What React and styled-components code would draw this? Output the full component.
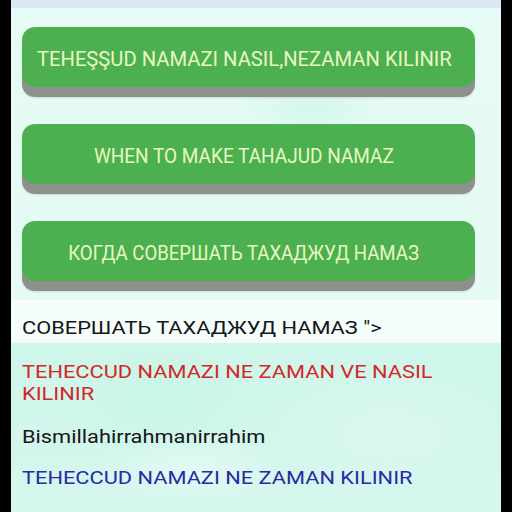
import React from "react";
import styled, { createGlobalStyle } from "styled-components";

const Global = createGlobalStyle`
  html, body { margin: 0; padding: 0; background: #000; }
  body { width: 512px; height: 512px; overflow: hidden; font-family: Roboto, "Liberation Sans", Arial, sans-serif; }
`;

const Frame = styled.div`
  display: flex;
  width: 512px;
  height: 512px;
  background: #000;
`;

const Screen = styled.div`
  margin-left: 11px;
  width: 490px;
  height: 512px;
  display: flex;
  flex-direction: column;
  background:
    radial-gradient(ellipse 140px 50px at 180px 470px, rgba(235,252,247,0.6), rgba(235,252,247,0) 70%),
    radial-gradient(ellipse 160px 90px at 150px 400px, rgba(190,245,225,0.5), rgba(190,245,225,0) 70%),
    radial-gradient(ellipse 180px 90px at 380px 430px, rgba(225,250,243,0.6), rgba(225,250,243,0) 70%),
    radial-gradient(ellipse 120px 40px at 300px 108px, rgba(205,246,234,0.7), rgba(205,246,234,0) 70%),
    linear-gradient(180deg, #e6fbf4 0%, #e4faf3 60%, #cff6ea 68%, #d6f7ee 100%);
`;

const TopBar = styled.div`
  height: 8px;
  background: #dce9f5;
`;

const ButtonList = styled.div`
  display: flex;
  flex-direction: column;
  gap: 37px;
  padding: 19px 26px 0 11px;
`;

const GreenButton = styled.div`
  height: 60px;
  border-radius: 13px;
  background: #4cb050;
  box-shadow: 0 10px 0 #8e908e, 0 11px 2px rgba(0,0,0,0.12);
  display: flex;
  align-items: center;
  justify-content: center;
  padding: 3px 9px 0 0;
  box-sizing: border-box;
  color: #e8f8c2;
  font-family: Roboto, "Liberation Sans", sans-serif;
  font-size: 20px;
  white-space: nowrap;
`;

const ButtonLabel = styled.span`
  display: inline-block;
  transform: scaleX(${(p) => p.$sx || 1});
`;

const Rows = styled.div`
  display: flex;
  flex-direction: column;
  margin-top: 19px;
`;

const Band = styled.div`
  height: 43px;
  box-sizing: border-box;
  padding: 17px 11px 0;
  background: #f4fdfb;
`;

const Row = styled.div`
  margin-top: ${(p) => p.$mt || "0px"};
  padding: 0 11px;
  font-family: Roboto, "Liberation Sans", sans-serif;
  font-size: 17.5px;
  line-height: 22px;
  color: ${(p) => p.$color || "#161616"};
`;

const Wide = styled.span`
  display: inline-block;
  width: ${(p) => p.$w || 370}px;
  transform: scaleX(1.245);
  transform-origin: left center;
  white-space: normal;
`;

export default function App() {
  return (
    <>
      <Global />
      <Frame>
        <Screen>
          <TopBar />
          <ButtonList>
            <GreenButton>
              <ButtonLabel $sx={1.01}>TEHEŞŞUD NAMAZI NASIL,NEZAMAN KILINIR</ButtonLabel>
            </GreenButton>
            <GreenButton>
              <ButtonLabel $sx={0.95}>WHEN TO MAKE TAHAJUD NAMAZ</ButtonLabel>
            </GreenButton>
            <GreenButton>
              <ButtonLabel $sx={0.93}>КОГДА СОВЕРШАТЬ ТАХАДЖУД НАМАЗ</ButtonLabel>
            </GreenButton>
          </ButtonList>
          <Rows>
            <Band>
              <Row style={{ padding: 0 }}>
                <Wide>СОВЕРШАТЬ ТАХАДЖУД НАМАЗ "&gt;</Wide>
              </Row>
            </Band>
            <Row $color="#d3282b" $mt="17.5px">
              <Wide $w={350}>TEHECCUD NAMAZI NE ZAMAN VE NASIL KILINIR</Wide>
            </Row>
            <Row $mt="21px">
              <Wide>Bismillahirrahmanirrahim</Wide>
            </Row>
            <Row $color="#2a2aa4" $mt="19.7px">
              <Wide>TEHECCUD NAMAZI NE ZAMAN KILINIR</Wide>
            </Row>
          </Rows>
        </Screen>
      </Frame>
    </>
  );
}
